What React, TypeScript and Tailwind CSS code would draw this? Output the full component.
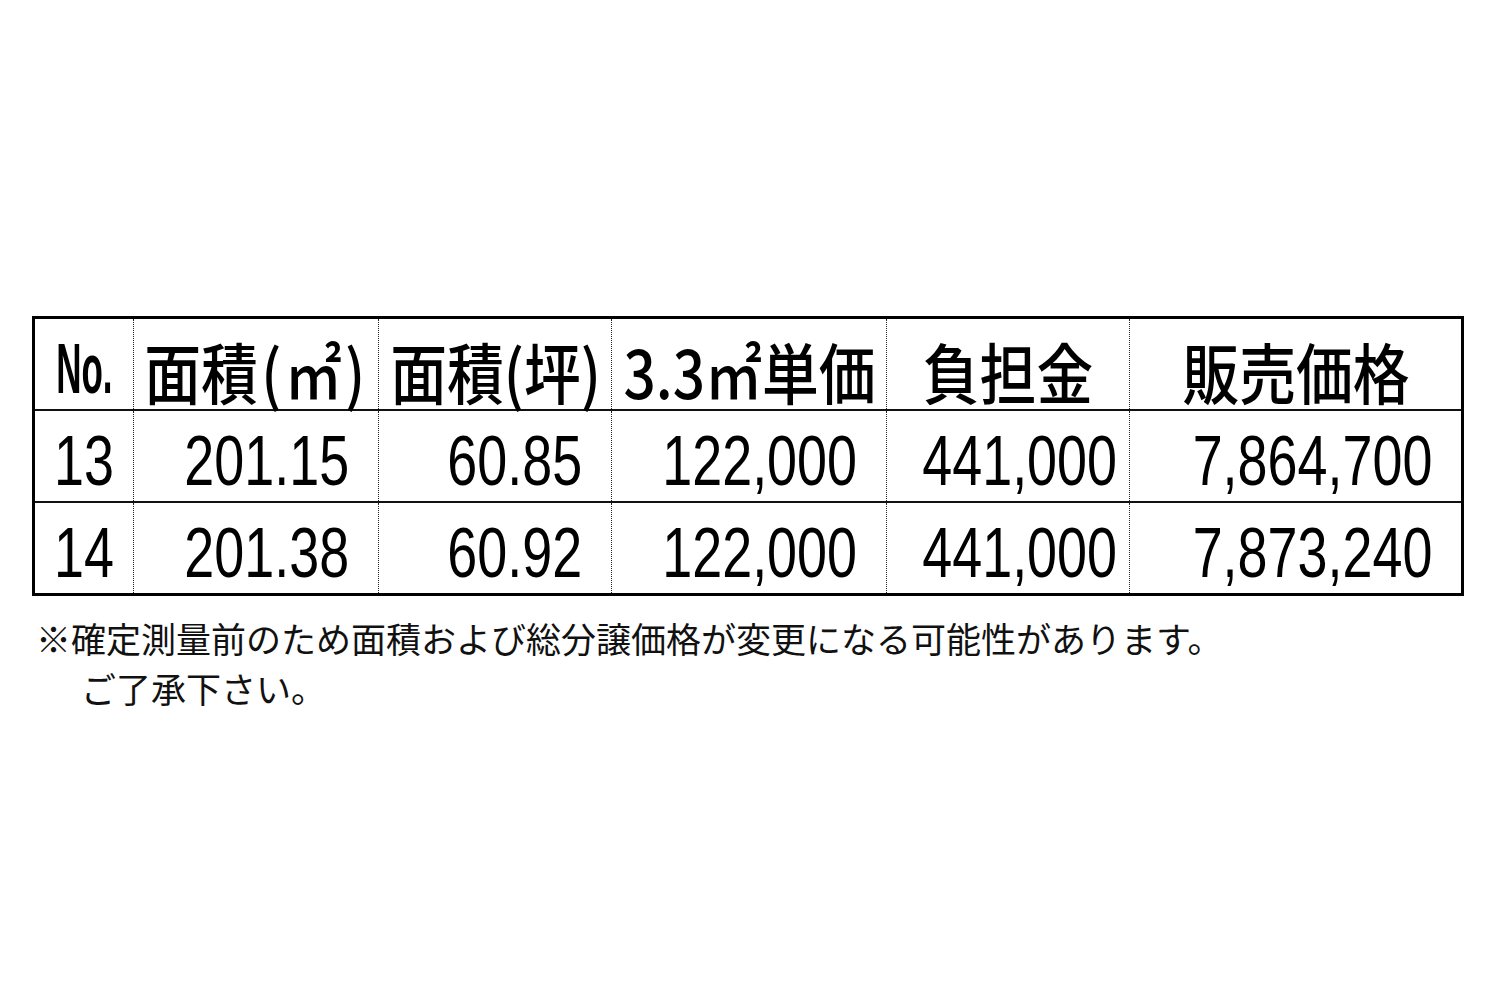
import React from 'react';

// ============================================================
// 区画 price table with footnote
// ============================================================
const GRID = 'grid grid-cols-[98px_245px_233px_275px_243px_332px]';
const CJK = "font-['Noto_Sans_CJK_JP','Noto_Sans',sans-serif]";
const NUM = "font-['Liberation_Sans',Arial,sans-serif]";

const headers: React.ReactNode[] = [
  <>
    面積<span className="mx-[4px]">(</span>㎡<span className="mx-[4px]">)</span>
  </>,
  '面積(坪)',
  '3.3㎡単価',
  '負担金',
  '販売価格',
];

const rows = [
  { no: '13', values: ['201.15', '60.85', '122,000', '441,000', '7,864,700'] },
  { no: '14', values: ['201.38', '60.92', '122,000', '441,000', '7,873,240'] },
];

// right padding of each number column (the 負担金 column sits tighter)
const padRight = ['pr-[29px]', 'pr-[29px]', 'pr-[29px]', 'pr-[12px]', 'pr-[29px]'];

export default function App() {
  return (
    <div className="min-h-[1000px] w-[1500px] bg-white pl-[32px] pt-[316px] text-black">
      {/* Table */}
      <div className="w-[1432px] border-[3px] border-black">
        {/* Header */}
        <div className={`${GRID} h-[90px]`}>
          <div className="flex items-center justify-center pt-[10px]">
            <span className={`${NUM} inline-block scale-x-[0.5] text-[70px] font-bold leading-none`}>No.</span>
          </div>
          {headers.map((h, i) => (
            <div
              key={i}
              className="flex items-center justify-center border-l border-dotted border-[#222] pt-[12px]"
            >
              <span className={`${CJK} inline-block scale-x-[0.86] whitespace-nowrap text-[66px] font-medium leading-none`}>
                {h}
              </span>
            </div>
          ))}
        </div>

        {/* Data rows */}
        {rows.map((row) => (
          <div key={row.no} className={`${GRID} h-[92px] border-t-2 border-[#111]`}>
            <div className="flex items-center justify-center pt-[10px]">
              <span className={`${NUM} inline-block scale-x-[0.77] text-[70px] leading-none`}>{row.no}</span>
            </div>
            {row.values.map((v, i) => (
              <div
                key={i}
                className={`flex items-center justify-end border-l border-dotted border-[#222] pt-[10px] ${padRight[i]}`}
              >
                <span className={`${NUM} inline-block origin-right scale-x-[0.77] text-[70px] leading-none`}>
                  {v}
                </span>
              </div>
            ))}
          </div>
        ))}
      </div>

      {/* Footnote */}
      <div className={`${CJK} mt-[17px] text-[35px] leading-[50px] text-[#111]`}>
        <div className="pl-[4px]">※確定測量前のため面積および総分譲価格が変更になる可能性があります。</div>
        <div className="pl-[49px]">ご了承下さい。</div>
      </div>
    </div>
  );
}
